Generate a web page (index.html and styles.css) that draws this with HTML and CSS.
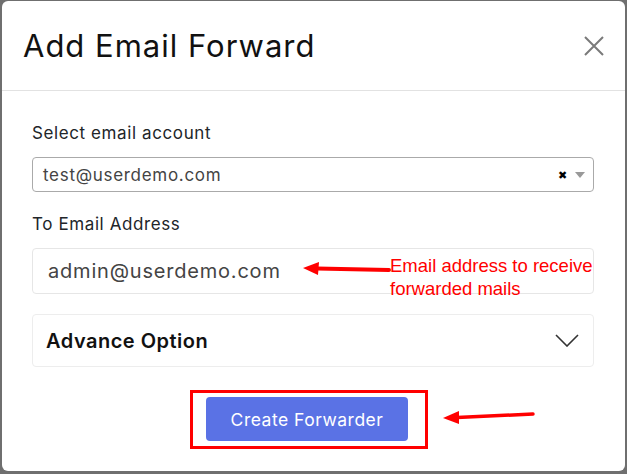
FILE: index.html
```html
<!DOCTYPE html>
<html lang="en" dir="ltr">
  <head>
    <meta charset="utf-8">
    <title>Add Email Forward</title>
    <link rel="stylesheet" href="styles.css">
  </head>
  <body>
<div class="modal">
  <div class="modalHeader">
    <h2 class="modalTitle">Add Email Forward</h2>
    <button class="closeBtn" aria-label="Close">
      <svg width="20" height="20" viewBox="0 0 20 20"><path d="M1 1 L19 19 M19 1 L1 19" stroke="#7a7a7a" stroke-width="2" fill="none"/></svg>
    </button>
  </div>
  <div class="modalBody">
    <label class="fieldLabel">Select email account</label>
    <div class="selectBox">
      <span class="selectValue">test@userdemo.com</span>
      <span class="selectClear">&#x2716;</span>
      <span class="selectArrow"></span>
    </div>

    <label class="fieldLabel">To Email Address</label>
    <div class="inputRow">
      <input class="textInput" value="admin@userdemo.com">
      <svg class="noteArrow" width="92" height="16" viewBox="0 0 92 16"><path d="M14 7.5 L86 9" stroke="#ff0000" stroke-width="4" stroke-linecap="round" fill="none"/><path d="M0 7 L16 1 L15 14 Z" fill="#ff0000"/></svg>
      <div class="note">Email address to receive<br>forwarded mails</div>
    </div>

    <div class="advance">
      <span class="advanceTitle">Advance Option</span>
      <svg width="24" height="13" viewBox="0 0 24 13"><path d="M1 1 L12 12 L23 1" stroke="#333" stroke-width="1.6" fill="none"/></svg>
    </div>

    <div class="submitRow">
      <div class="highlight">
        <button class="submitBtn">Create Forwarder</button>
      </div>
      <svg class="btnArrow" width="94" height="16" viewBox="0 0 94 16"><path d="M14 8.5 L90 5" stroke="#ff0000" stroke-width="3.5" stroke-linecap="round" fill="none"/><path d="M0 9 L16 2 L16 15 Z" fill="#ff0000"/></svg>
    </div>
  </div>
</div>
  </body>
</html>
```

FILE: styles.css
```css
* {
  margin: 0px;
  padding: 0px;
  box-sizing: border-box;
}
body {
  background-color: #6f6f6f;
  font-family: 'Inter', 'Open Sans', sans-serif;
  color: #212529;
}
.modal {
  margin: 1px 2px 3px 2px;
  height: 470px;
  background-color: white;
  border-radius: 6px;
}
.modalHeader {
  height: 90px;
  border-bottom: 1px solid #e2e2e2;
  display: flex;
  align-items: center;
  justify-content: space-between;
  padding: 0px 21px 0px 21px;
}
.modalTitle {
  font-size: 31px;
  font-weight: 400;
  color: #111;
  letter-spacing: 1px;
}
.closeBtn {
  border: none;
  background: none;
  width: 20px;
  height: 20px;
  display: flex;
}
.modalBody {
  padding: 30px 31px 0px 30px;
}
.fieldLabel {
  display: block;
  font-size: 17px;
  letter-spacing: 0.6px;
  line-height: 24px;
  margin-bottom: 12px;
}
.selectBox {
  height: 35px;
  border: 1px solid #aaaaaa;
  border-radius: 4px;
  display: flex;
  align-items: center;
  padding: 0px 8px 0px 10px;
  margin-bottom: 20px;
}
.selectValue {
  flex: 1;
  font-size: 17px;
  letter-spacing: 0.7px;
  color: #444;
}
.selectClear {
  font-size: 11px;
  color: #000;
  margin-right: 8px;
}
.selectArrow {
  width: 0px;
  height: 0px;
  border-left: 5px solid transparent;
  border-right: 5px solid transparent;
  border-top: 6px solid #999;
}
.inputRow {
  position: relative;
  margin-bottom: 20px;
}
.textInput {
  width: 100%;
  height: 46px;
  border: 1px solid #e6e6e6;
  border-radius: 4px;
  padding: 0px 15px;
  font-family: inherit;
  font-size: 20px;
  letter-spacing: 0.8px;
  color: #444;
}
.noteArrow {
  position: absolute;
  left: 271px;
  top: 13px;
}
.note {
  position: absolute;
  left: 358px;
  top: 6px;
  font-family: 'Liberation Sans', sans-serif;
  font-size: 18.5px;
  line-height: 23px;
  color: #ff0000;
}
.advance {
  height: 53px;
  border: 1px solid #ededed;
  border-radius: 4px;
  display: flex;
  align-items: center;
  justify-content: space-between;
  padding: 0px 14px 0px 13px;
  margin-bottom: 23px;
}
.advanceTitle {
  font-size: 20px;
  font-weight: 600;
  letter-spacing: 0.5px;
  color: #111;
}
.submitRow {
  position: relative;
  display: flex;
  justify-content: center;
  padding-right: 8px;
}
.highlight {
  border: 3px solid #ff0000;
  padding: 4px 17px 5px 13px;
}
.submitBtn {
  width: 202px;
  height: 44px;
  border: none;
  border-radius: 4px;
  background-color: #5a72e5;
  color: white;
  font-family: inherit;
  font-size: 17.5px;
  letter-spacing: 0.5px;
}
.btnArrow {
  position: absolute;
  left: 411px;
  top: 19px;
}
```
